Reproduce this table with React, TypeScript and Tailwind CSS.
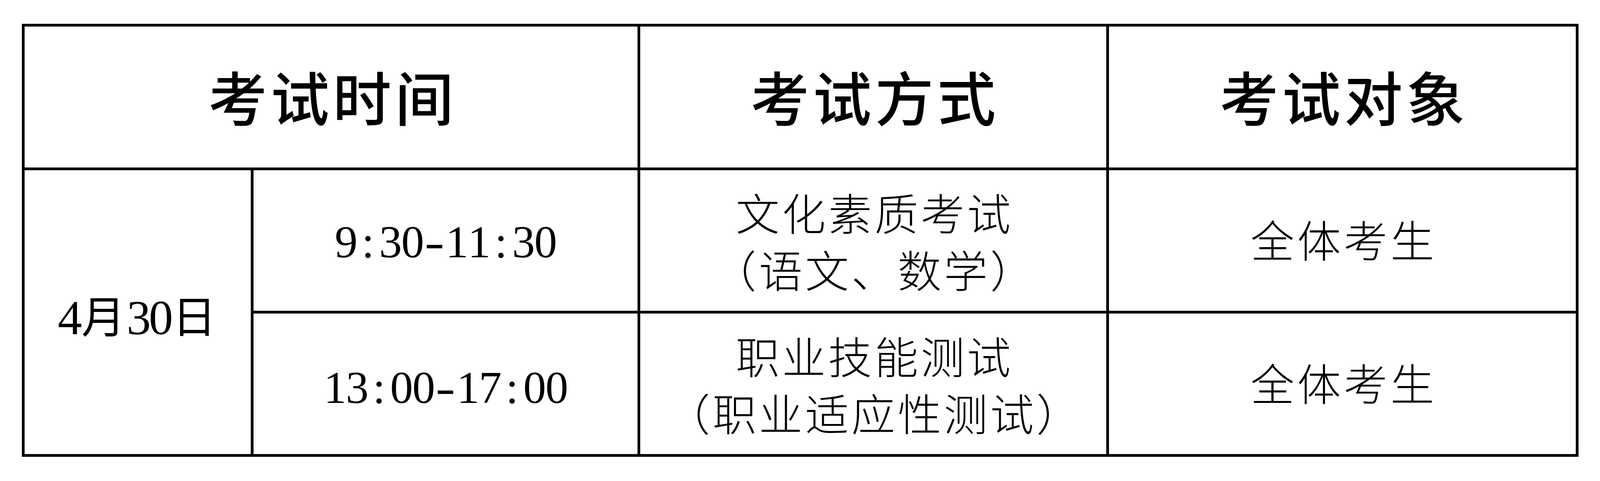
import React from "react";

const cjk = { fontFamily: '"Liberation Serif", "Noto Sans CJK SC", serif' };

function Mono({ text }: { text: string }) {
  return (
    <div className="flex items-center justify-center text-[117px] leading-none text-black" style={cjk}>
      {text.split("").map((c, i) => (
        <span key={i} className={c === "-" ? "inline-block w-[1.386vw] text-center scale-x-[1.3]" : "inline-block w-[1.386vw] text-center"}>
          {c}
        </span>
      ))}
    </div>
  );
}

export default function App() {
  return (
    <div className="w-full h-screen overflow-hidden bg-white pt-[61px] pl-[1.364%] pr-[1.34%]">
      <div className="grid w-full grid-cols-[633fr_1074fr_1303fr_1306fr] grid-rows-[361px_360px_360px] gap-[7px] bg-black p-[7px]">
        {/* header */}
        <div className="col-span-2 flex items-center justify-center bg-white pt-[20px] pl-[0.224vw] text-[150px] font-medium tracking-[0.224vw] leading-none text-black" style={cjk}>
          考试时间
        </div>
        <div className="flex items-center justify-center bg-white pt-[20px] pl-[0.224vw] text-[150px] font-medium tracking-[0.224vw] leading-none text-black" style={cjk}>
          考试方式
        </div>
        <div className="flex items-center justify-center bg-white pt-[20px] pl-[0.224vw] text-[150px] font-medium tracking-[0.224vw] leading-none text-black" style={cjk}>
          考试对象
        </div>

        {/* date */}
        <div className="row-span-2 flex items-center justify-center bg-white pt-[30px] text-[112px] leading-none text-black" style={cjk}>
          <span className="inline-block w-[1.386vw] text-center text-[124px]">4</span>
          <span className="inline-block px-[0.09vw]">月</span>
          <span className="inline-block w-[1.386vw] text-center text-[124px]">3</span>
          <span className="inline-block w-[1.386vw] text-center text-[124px]">0</span>
          <span className="inline-block px-[0.09vw]">日</span>
        </div>

        {/* row 1 */}
        <div className="flex items-center justify-center bg-white pt-[6px]">
          <Mono text="9:30-11:30" />
        </div>
        <div className="flex flex-col items-center justify-center bg-white pt-[20px] text-[112px] font-light leading-[146px] tracking-[0.157vw] text-black" style={cjk}>
          <div className="pl-[0.157vw]">文化素质考试</div>
          <div className="pl-[0.157vw]">（语文、数学）</div>
        </div>
        <div className="flex items-center justify-center bg-white pt-[12px] pl-[0.179vw] text-[112px] font-light leading-none tracking-[0.179vw] text-black" style={cjk}>
          全体考生
        </div>

        {/* row 2 */}
        <div className="flex items-center justify-center bg-white pt-[18px]">
          <Mono text="13:00-17:00" />
        </div>
        <div className="flex flex-col items-center justify-center bg-white pt-[20px] text-[112px] font-light leading-[146px] tracking-[0.157vw] text-black" style={cjk}>
          <div className="pl-[0.157vw]">职业技能测试</div>
          <div className="pl-[0.157vw]">（职业适应性测试）</div>
        </div>
        <div className="flex items-center justify-center bg-white pt-[12px] pl-[0.179vw] text-[112px] font-light leading-none tracking-[0.179vw] text-black" style={cjk}>
          全体考生
        </div>
      </div>
    </div>
  );
}
